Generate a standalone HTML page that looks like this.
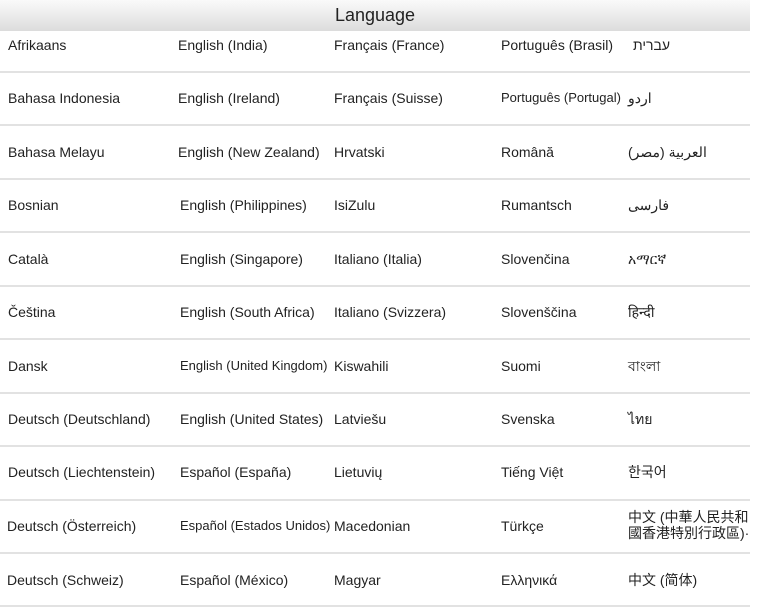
<!DOCTYPE html>
<html><head><meta charset="utf-8"><style>
body{margin:0;width:784px;height:607px;background:#fff;position:relative;overflow:hidden;font-family:"Liberation Sans","Noto Sans CJK SC",sans-serif;font-size:14px;color:#222}
.h{position:absolute;left:0;top:0;width:750px;height:31px;background:linear-gradient(#fafafa,#dcdcdc);text-align:center;font-size:18px;line-height:31px;color:#222}
.l{position:absolute;left:0;width:750px;height:2px;background:#e2e2e2}
.t{position:absolute;white-space:nowrap;line-height:16px}
</style></head><body>
<div class="h">Language</div>
<div id="c"></div>
<script>
var rows=[
["Afrikaans","English (India)","Français (France)","Português (Brasil)","עברית"],
["Bahasa Indonesia","English (Ireland)","Français (Suisse)","Português (Portugal)","اردو"],
["Bahasa Melayu","English (New Zealand)","Hrvatski","Română","العربية (مصر)"],
["Bosnian","English (Philippines)","IsiZulu","Rumantsch","فارسی"],
["Català","English (Singapore)","Italiano (Italia)","Slovenčina","አማርኛ"],
["Čeština","English (South Africa)","Italiano (Svizzera)","Slovenščina","हिन्दी"],
["Dansk","English (United Kingdom)","Kiswahili","Suomi","বাংলা"],
["Deutsch (Deutschland)","English (United States)","Latviešu","Svenska","ไทย"],
["Deutsch (Liechtenstein)","Español (España)","Lietuvių","Tiếng Việt","한국어"],
["Deutsch (Österreich)","Español (Estados Unidos)","Macedonian","Türkçe","中文 (中華人民共和<br>國香港特別行政區)·"],
["Deutsch (Schweiz)","Español (México)","Magyar","Ελληνικά","中文 (简体)"]];
var cy=[45,98,152,205,259,312,366,419,472,526,580];
var ly=[71,124,178,231,285,338,392,445,499,552,605];
var xs=[8,178,334,501,628];
var h="";
rows.forEach(function(r,i){
 r.forEach(function(t,j){
  var x=xs[j]; if(j==1&&i>=3)x=180; if(j==0&&i>=9)x=7; if(j==4&&i==0)x=633;
  var fs=(j==3&&i==1)||(j==1&&(i==6||i==9))?"font-size:13px;":"";
  var two=t.indexOf("<br>")>=0;
  h+='<div class="t" style="left:'+x+'px;top:'+(cy[i]-(two?17:8))+'px;'+fs+'">'+t+'</div>';
 });
 h+='<div class="l" style="top:'+ly[i]+'px"></div>';
});
document.getElementById("c").innerHTML=h;
</script>
</body></html>
